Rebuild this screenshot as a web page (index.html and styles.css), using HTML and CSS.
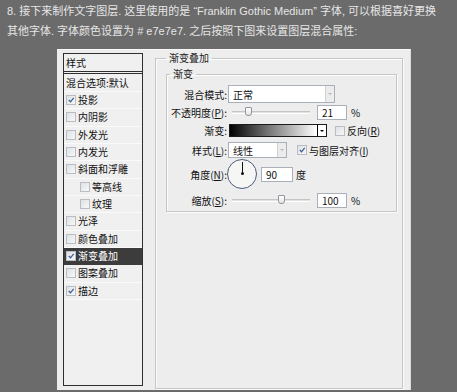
FILE: index.html
```html
<!DOCTYPE html>
<html lang="zh-CN">
<head>
    <meta charset="UTF-8">
    <title>图层样式 - 渐变叠加</title>
    <link rel="stylesheet" href="styles.css">
</head>
<body>
    <div class="intro">
        <p>8. 接下来制作文字图层. 这里使用的是 “Franklin Gothic Medium” 字体, 可以根据喜好更换</p>
        <p>其他字体. 字体颜色设置为 # e7e7e7. 之后按照下图来设置图层混合属性:</p>
    </div>

    <div class="dialog">
        <ul class="style-list">
            <li class="list-head">样式</li>
            <li class="list-blend">混合选项:默认</li>
            <li><span class="check on"><svg viewBox="0 0 9 9"><polyline points="2,4.5 4,6.5 7.5,2"/></svg></span>投影</li>
            <li><span class="check"></span>内阴影</li>
            <li><span class="check"></span>外发光</li>
            <li><span class="check"></span>内发光</li>
            <li><span class="check"></span>斜面和浮雕</li>
            <li class="sub"><span class="check"></span>等高线</li>
            <li class="sub"><span class="check"></span>纹理</li>
            <li><span class="check"></span>光泽</li>
            <li><span class="check"></span>颜色叠加</li>
            <li class="selected"><span class="check on"><svg viewBox="0 0 9 9"><polyline points="2,4.5 4,6.5 7.5,2"/></svg></span>渐变叠加</li>
            <li><span class="check"></span>图案叠加</li>
            <li><span class="check on"><svg viewBox="0 0 9 9"><polyline points="2,4.5 4,6.5 7.5,2"/></svg></span>描边</li>
        </ul>

        <fieldset class="group outer">
            <legend>渐变叠加</legend>
            <fieldset class="group inner">
                <legend>渐变</legend>

                <div class="row row-mode">
                    <label>混合模式:</label>
                    <div class="select select-mode"><span>正常</span><i class="drop"></i></div>
                </div>

                <div class="row row-opacity">
                    <label>不透明度(<u>P</u>):</label>
                    <div class="slider"><i class="thumb" style="left: 13px"></i></div>
                    <div class="field">21</div>
                    <span class="unit">%</span>
                </div>

                <div class="row row-gradient">
                    <label>渐变:</label>
                    <div class="gradient"><span class="ramp"></span><i class="drop dark"></i></div>
                    <span class="check"></span>
                    <span class="opt">反向(<u>R</u>)</span>
                </div>

                <div class="row row-style">
                    <label>样式(<u>L</u>):</label>
                    <div class="select select-style"><span>线性</span><i class="drop"></i></div>
                    <span class="check on"><svg viewBox="0 0 9 9"><polyline points="2,4.5 4,6.5 7.5,2"/></svg></span>
                    <span class="opt">与图层对齐(<u>I</u>)</span>
                </div>

                <div class="row row-angle">
                    <label>角度(<u>N</u>):</label>
                    <div class="dial"><i class="hand"></i></div>
                    <div class="field">90</div>
                    <span class="unit">度</span>
                </div>

                <div class="row row-scale">
                    <label>缩放(<u>S</u>):</label>
                    <div class="slider"><i class="thumb" style="left: 46px"></i></div>
                    <div class="field">100</div>
                    <span class="unit">%</span>
                </div>
            </fieldset>
        </fieldset>
    </div>
</body>
</html>
```

FILE: styles.css
```css
body {
    margin: 0;
    background-color: #6b6b6b;
    font-family: "Liberation Sans", "Noto Sans CJK SC", sans-serif;
    width: 457px;
    height: 392px;
    overflow: hidden;
}
.intro {
    padding: 1px 0 0 7px;
    height: 40px;
    color: #e6e6e6;
    font-size: 11px;
    line-height: 20px;
}
.intro p {
    margin: 0;
    white-space: nowrap;
}

/* dialog */
.dialog {
    margin: 8px 0 0 57px;
    width: 354px;
    height: 341px;
    box-sizing: border-box;
    padding: 0 0 0 6px;
    background-color: #ededed;
    border-top: 1px solid #f8f8f8;
    border-right: 1px solid #dcdcdc;
    display: flex;
    align-items: flex-start;
    font-family: "Noto Sans CJK SC", sans-serif;
    font-size: 10px;
    color: #111;
}

/* left style list */
.style-list {
    list-style: none;
    margin: 3px 0 0 0;
    padding: 0;
    width: 80px;
    height: 333px;
    box-sizing: border-box;
    border: 1px solid #2f2f2f;
    background-color: #f0f0f0;
    flex: none;
}
.style-list li {
    height: 17.33px;
    box-sizing: border-box;
    padding-left: 2px;
    border-bottom: 1px solid #fafafa;
    display: flex;
    align-items: center;
    gap: 2px;
    line-height: 1;
    white-space: nowrap;
}
.style-list li.list-head {
    height: 20px;
    padding-top: 1px;
    border-bottom: 3px double #2f2f2f;
}
.style-list li.list-blend {
    height: 18px;
}
.style-list li.sub {
    padding-left: 16px;
}
.style-list li.selected {
    background-color: #3c3c3c;
    color: #fff;
    border-bottom-color: #3c3c3c;
}

.check {
    width: 8px;
    height: 8px;
    border: 1px solid #b9bcc2;
    background: linear-gradient(135deg, #dfe1e4, #f7f7f7);
    flex: none;
    display: inline-flex;
}
.check svg {
    width: 8px;
    height: 8px;
}
.check polyline {
    fill: none;
    stroke: #3a5f9a;
    stroke-width: 1.4;
}

/* group boxes */
.group {
    margin: 0;
    border: 1px solid #c6c6c6;
    box-shadow: 1px 1px 0 #fbfbfb, inset 1px 1px 0 #fbfbfb;
}
.group legend {
    padding: 0 3px;
    line-height: 14px;
    color: #222;
}
.outer {
    margin: 1px 0 0 12px;
    width: 248px;
    height: 338px;
    box-sizing: border-box;
    padding: 0 5px 0 10px;
    flex: none;
}
.inner {
    margin-top: 2px;
    padding: 4px 0 3px 3px;
}

/* form rows */
.row {
    display: flex;
    align-items: center;
    white-space: nowrap;
}
.row label {
    width: 57px;
    text-align: right;
    flex: none;
}
.row-mode { height: 18px; }
.row-opacity { height: 15px; margin-top: 2px; }
.row-gradient { height: 13px; margin-top: 4px; }
.row-style { height: 16px; margin-top: 5px; }
.row-angle { height: 30px; margin-top: 1px; }
.row-scale { height: 15px; margin-top: 4px; }

.select {
    margin-left: 1px;
    height: 100%;
    box-sizing: border-box;
    border: 1px solid #aab0ba;
    background-color: #fff;
    display: flex;
    align-items: center;
}
.select span {
    flex: 1;
    padding-left: 4px;
}
.select-mode { width: 107px; }
.select-style { width: 59px; }

.drop {
    width: 8px;
    height: 100%;
    background-color: #ececec;
    border-left: 1px solid #d2d2d2;
    display: flex;
    align-items: center;
    justify-content: center;
}
.drop::after {
    content: "";
    border-left: 2px solid transparent;
    border-right: 2px solid transparent;
    border-top: 2px solid #b8b8b8;
}
.drop.dark {
    background-color: #fff;
    border-left-color: #000;
}
.drop.dark::after {
    border-top-color: #000;
}

.slider {
    position: relative;
    margin-left: 5px;
    width: 78px;
    height: 3px;
    border-top: 1px solid #c4c4c4;
    border-bottom: 1px solid #fff;
    box-sizing: border-box;
    background-color: #e2e2e2;
}
.thumb {
    position: absolute;
    top: -5px;
    width: 7px;
    height: 9px;
    box-sizing: border-box;
    border: 1px solid #8e959e;
    border-radius: 1px 1px 3px 3px;
    background: linear-gradient(#ffffff, #e4e4e4);
}

.field {
    margin-left: 7px;
    width: 30px;
    height: 100%;
    box-sizing: border-box;
    border: 1px solid #aab0ba;
    background-color: #fff;
    padding-left: 4px;
    display: flex;
    align-items: center;
}
.unit {
    margin-left: 4px;
}

.gradient {
    margin-left: 2px;
    width: 98px;
    height: 100%;
    box-sizing: border-box;
    border: 1px solid #1a1a1a;
    display: flex;
}
.gradient .ramp {
    flex: 1;
    background: linear-gradient(to right, #000 0%, #777 45%, #fff 100%);
}
.row-gradient .check {
    margin-left: 8px;
}
.row-style .check {
    margin-left: 10px;
}
.opt {
    margin-left: 2px;
}

.dial {
    width: 30px;
    height: 30px;
    box-sizing: border-box;
    border: 1.5px solid #4b5b7c;
    border-radius: 50%;
    background-color: #f6f6f4;
    position: relative;
    flex: none;
}
.hand {
    position: absolute;
    left: 13.5px;
    top: 2px;
    width: 1px;
    height: 11px;
    background-color: #111;
}
.hand::after {
    content: "";
    position: absolute;
    left: -1px;
    bottom: -2px;
    width: 3px;
    height: 3px;
    border-radius: 50%;
    background-color: #111;
}
.row-angle .field {
    margin-left: 4px;
    width: 32px;
    height: 15px;
}
.row-angle .unit {
    margin-left: 3px;
}
```
